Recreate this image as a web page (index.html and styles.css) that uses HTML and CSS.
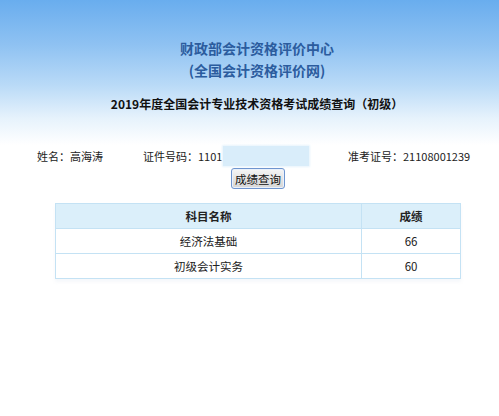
FILE: index.html
```html
<!DOCTYPE html>
<html lang="zh-CN">
<head>
<meta charset="utf-8">
<title>成绩查询</title>
<link rel="stylesheet" href="styles.css">
</head>
<body>
<div class="page">
  <div class="header">
    <div class="org">财政部会计资格评价中心</div>
    <div class="org">(全国会计资格评价网)</div>
    <div class="title">2019年度全国会计专业技术资格考试成绩查询（初级）</div>
  </div>
  <div class="info">
    <div class="item name">姓名：高海涛</div>
    <div class="item idno">证件号码：1101<span class="mask"></span></div>
    <div class="item exam">准考证号：21108001239</div>
  </div>
  <div class="actions">
    <button class="btn" type="button">成绩查询</button>
  </div>
  <table class="scores">
    <thead>
      <tr><th class="c1">科目名称</th><th class="c2">成绩</th></tr>
    </thead>
    <tbody>
      <tr><td class="c1">经济法基础</td><td class="c2">66</td></tr>
      <tr><td class="c1">初级会计实务</td><td class="c2">60</td></tr>
    </tbody>
  </table>
</div>
</body>
</html>
```
FILE: styles.css
```css
html, body {
  margin: 0;
  padding: 0;
  background: #fff;
}
body {
  font-family: "Noto Sans CJK SC", "Noto Sans", sans-serif;
  color: #222;
}
.page {
  width: 499px;
  min-height: 416px;
  background: linear-gradient(180deg, #69adee 0px, #8fc2f2 45px, #b9daf7 85px, #e6f2fc 118px, #ffffff 145px) no-repeat;
  background-size: 100% 150px;
  background-color: #fff;
  overflow: hidden;
}
.header {
  padding-top: 37px;
  padding-left: 15px;
  text-align: center;
}
.org {
  font-size: 14px;
  line-height: 22px;
  font-weight: bold;
  color: #2b5c9e;
}
.title {
  margin-top: 13px;
  font-size: 12px;
  line-height: 20px;
  font-weight: bold;
  color: #111;
}
.info {
  display: flex;
  margin-top: 32px;
  padding-left: 37px;
  font-size: 11px;
  line-height: 20px;
  color: #222;
}
.item.name { width: 106px; }
.item.idno { width: 205px; display: flex; align-items: center; }
.mask {
  display: inline-block;
  width: 86px;
  height: 20px;
  margin-left: 1px;
  background: #d9edfa;
  box-shadow: 0 0 2px 1px #e6f3fc;
}
.actions {
  display: flex;
  justify-content: center;
  margin-top: 2px;
  padding-left: 17px;
}
.btn {
  width: 54px;
  height: 21px;
  padding: 0;
  font-family: "Noto Sans CJK SC", sans-serif;
  font-size: 11.5px;
  line-height: 18px;
  color: #111;
  background: linear-gradient(180deg, #f6f6f6, #e4e4e4 50%, #d6d6d6);
  border: 1px solid #6f95cf;
  border-radius: 3px;
  box-shadow: inset 0 0 0 1px #eaf1fb;
}
.scores {
  margin: 14px 0 0 55px;
  width: 406px;
  border-collapse: collapse;
  font-size: 11.5px;
  box-shadow: 0 3px 3px rgba(220, 228, 238, 0.25);
}
.scores th, .scores td {
  border: 1px solid #c4e2f4;
  text-align: center;
  padding: 0;
  height: 24px;
  color: #222;
}
.scores th {
  background: #dbeffa;
  font-weight: bold;
  height: 24px;
}
.scores .c1 { width: 306px; }
.scores .c2 { width: 98px; }
```
